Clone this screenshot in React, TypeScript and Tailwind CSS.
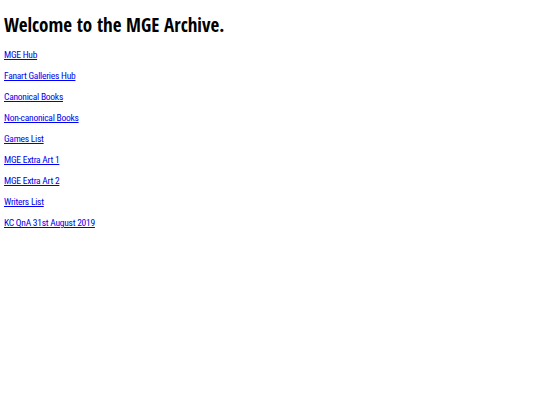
export default function App() {
  const links = [
    "MGE Hub",
    "Fanart Galleries Hub",
    "Canonical Books",
    "Non-canonical Books",
    "Games List",
    "MGE Extra Art 1",
    "MGE Extra Art 2",
    "Writers List",
    "KC QnA 31st August 2019",
  ];
  return (
    <div className="min-h-[405px] bg-white px-[4px] pt-[13px]" style={{ fontFamily: '"Open Sans Condensed", "DejaVu Sans", sans-serif' }}>
      <h1 className="text-[19px] font-bold leading-[24px] text-black">Welcome to the MGE Archive.</h1>
      <div className="mt-[11px] flex flex-col gap-[8px]" style={{ fontFamily: '"Roboto Condensed", "DejaVu Sans", sans-serif' }}>
        {links.map((l) => (
          <a key={l} href="#" className="text-[9.5px] leading-[13px] tracking-[-0.25px] text-[#0000ee] underline self-start">
            {l}
          </a>
        ))}
      </div>
    </div>
  );
}
